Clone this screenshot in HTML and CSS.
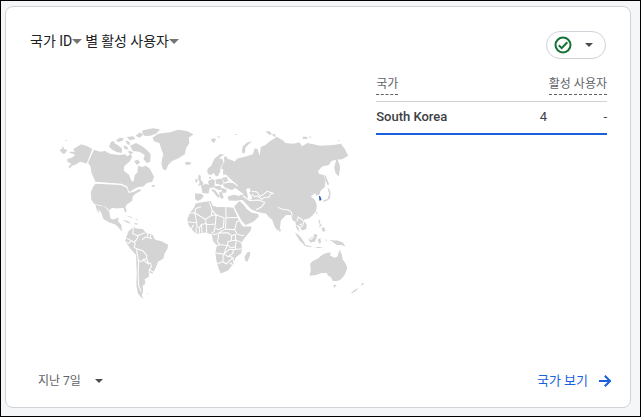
FILE: index.html
```html
<!DOCTYPE html>
<html lang="ko">
<head>
<meta charset="utf-8">
<meta name="viewport" content="width=device-width, initial-scale=1">
<title>국가 ID별 활성 사용자</title>
<link rel="stylesheet" href="styles.css">
</head>
<body>
<main class="card">
  <header class="card-head">
    <h2 class="title">
      <button class="title-pick" type="button">국가 ID<svg class="title-caret" viewBox="0 0 10 5" aria-hidden="true"><path d="M0 0h10L5 5z"/></svg></button>
      <span>별</span>
      <button class="title-pick" type="button">활성 사용자<svg class="title-caret" viewBox="0 0 10 5" aria-hidden="true"><path d="M0 0h10L5 5z"/></svg></button>
    </h2>
    <button class="status" type="button" aria-label="데이터 품질">
      <svg class="check" viewBox="0 0 18 18" aria-hidden="true"><circle cx="9" cy="9" r="7.5"/><path d="M4.8 9.3l2.9 2.8 5.6-5.8"/></svg>
      <svg class="caret" viewBox="0 0 8 4" aria-hidden="true"><path d="M0 0h8L4 4z"/></svg>
    </button>
  </header>

  <section class="content">
    <svg class="map" viewBox="30 72 346 288" role="img" aria-label="세계 지도">
      <!-- North America -->
      <g transform="translate(50 120) scale(.33333)">
        <path d="M127 90L110 133 98 130 90 128 78 136 66 140 58 148 56 142 64 134 52 128 52 120 64 116 72 112 74 106 58 102 60 98 74 98 70 90 86 80 94 76 112 82z"/>
        <path d="M28 92l8-2 2-10 5 10 9 4-8 10h-6zM46 62l6 2-4 3zM56 148l-10 4-10 3 12-3z"/>
        <path d="M132 92l18 6 15-2 15 8 25 4 20-2 7 6 10-8 4 10-6 12-18 16v14l14 10 10 22 5-2 3-18 8-8 2-20 12 4 12-4 12 10 12 24-6 14-16 4-10 10-16 2-12 6-12 8-4-2-4-14-18-8-78-6-12-28-2-16-8-14z"/>
        <path d="M136 194l76 4 18 8 6 16 16-4 16-8 6 4-18 10-8 8-2 14-16 10-4 8 4 12-4 6-6-16-20 2-14-2-8 8-12-12-20-4-14-4-8-12-2-22 8-18z"/>
        <path d="M136 256l10 4 18 2 8 10 6 6 2 18 8 8 14-6 4 4-6 10 14 14 2 12-12-14-8-8-18-6-18-10-6-18-10-14 4 18-8-14z"/>
        <path d="M176 82l12-12 16 9 12 10-1 13-16-3-14-8zM178 76l8-9 10 1-10 8zM198 64l12-8 12 2-6 8-12 3zM226 64l12 4 2 10-8-2zM220 80l10 2 6 10-12-2zM232 98l8-3 10 6-8 5zM230 54l20-2 6 8-16 4zM240 80l18-8 18 10 14 10 12 14-2 22-10 4-10-12 4-12-16-10-20-2zM256 50l14-10 10 8-12 8zM278 34l30-6 22 3-12 13-18 6-16 1-8-10zM252 126l12-4 6 8-10 8zM306 198l8 0 0 6-10-2zM216 302l18 4 8 8-8-2zM250 311l16 3-8 3z"/>
      </g>
      <!-- Greenland, Arctic and Europe -->
      <g transform="translate(150 120) scale(.33333)">
        <path d="M8 56l16-12 36-4 24-8 26 4 20 10-14 10 2 16-10 16-4 18-20 12-18 8-12 12-6 16-10-4-4-16 2-14 4-14-6-14-6-20-16-5zM104 131l8-3 12 2-4 6-12 2zM182 60l10-2 6 3-6 11-6-4zM198 54l10-2 2 4zM250 47l12-2-4 4z"/>
        <path d="M276 98l2-16 12-10 16-5-10 8-10 10-1 16zM146 166l6 4 0 12 8 10-2 6-14 2 5-10-5-12zM135 181l7-2 1 8-6 4z"/>
        <path d="M171 158l2-10 10-7 10-22 16-13 14 0-12 8-8 16-6 24-4 6-8 6-8 2z"/>
        <path d="M190 160l6-10 4-18 8-12 8-2 4 12-8 14-2 14-6 12-6 2z"/>
        <path d="M213 148l4-10 6-10-2-14 8-2 8 20-2 14-12 6z"/>
        <path d="M135 223l18 1 8 6-6 10-12 6-8-6zM152 200l16-6 8 4 3 8-4 18-18-2-2-14zM174 186l14-6 6 4 0 14-4 8-12 0zM196 181l20-3 4 14-6 6-16-4zM216 176l14-2 8 10-16 6zM218 194l22-4 20 5 2 8-16 10-10-3-14-6zM191 200l20 1 6 10-12 2-12-6zM182 210l12 2 14 18-2 8-12-14zM216 207l14 4-2 10-14-1zM207 218l8 2 6 16-6 4-6-8zM219 150l14-2 0 20-14-2zM178 173l5 0-1 7-5-1z"/>
        <path d="M232 232l20-5 22 5 4 10-20 3-22-1z"/>
      </g>
      <!-- Asia -->
      <g transform="translate(230 120) scale(.33333)">
        <path d="M-9 170L-12 144-16 116 2 122 14 127 22 118 50 112 68 106 74 88 82 90 89 110 92 84 106 78 120 66 140 54 158 64 166 72 190 74 208 70 216 82 232 72 270 80 310 78 332 74 344 90 354 110 340 118 330 122 322 120 330 142 326 172 316 162 312 146 318 122 304 126 296 138 276 142 264 156 266 164 280 168 286 184 284 204 272 214 267 228 258 229 255 222 242 232 254 242 260 258 258 276 246 290 236 298 220 302 230 318 228 330 216 334 208 322 204 320 209 340 198 326 196 308 188 304 182 288 168 288 152 304 150 324 144 336 134 324 126 302 116 294 108 284 80 278 62 270 48 254 34 240 28 228 42 226 26 214 14 206 22 198 6 184z"/>
        <path d="M35 100l3-16 12-12 14-5-10 9-9 10-3 18zM106 37l12 0 8 8-8 3zM126 46l9-1 2 8-8-1zM136 54l12 3-4 3zM217 53l12 0 4 6-14 1zM237 52l8 2-6 3zM322 63l7 0-3 3zM281 166l7 6 9 24-5 2-6-16zM292 206l6 5 3 10-1 16-8 7-12 4-1-4 13-4 5-16zM258 278l4 2-4 7z"/>
        <path class="korea" d="M266 230l5 2 3 11-6 2z"/>
        <path class="water" d="M48 210l10-3 4 8-5 6 9 12-3 10-9-3-2-14z"/>
        <path class="border" d="M65 217l14 1 12 14 10-7 10-8 18 6-8 3-4 8-14 1-8 6-12-10-10 1-8-6M144 265l14 6 18 2M-9 180l18 9 14 12M174 273l10 6 2 14M38 230l20 14 28-1M86 243l18 7-10 14-16 8"/>
      </g>
      <!-- South America -->
      <g transform="translate(110 200) scale(.33333)">
        <path d="M48 116L56 96 70 84 78 88 98 90 108 102 128 108 134 121 156 127 174 137 172 150 164 162 160 178 144 188 138 204 128 224 118 220 116 234 104 240 106 254 98 260 99 276 96 286 92 292 84 284 79 260 80 222 78 168 62 150 46 128z"/>
        <path class="border" d="M70 84l-2 20 16 6-4 12-8 6M84 110l12-6 8-2M112 103l1 10M122 107l-2 9M50 117l14 8-8 8-8-4M64 125l12 8-4 12 8 4 1 17M80 149l18 6 12 14 0 10-10 2-4 6-14-3M110 179l4 12 8 2 2 10-6 8 14 10M98 181l18 15M82 166l4 20-2 38 2 36 7 17M118 211l-1 12M96 122l10-8 20 4"/>
        <path d="M86 284l8 4 6 12-8-6zM108 282l6 0-3 2zM0 62l14-2 12-5-3 11 11 12 1 11-13-14-8-7-14 0zM48 49l12 3 11 4-10-1zM76 59l8 1-6 3z"/>
      </g>
      <!-- Africa and Arabia -->
      <g transform="translate(180 180) scale(.33333)">
        <path d="M46 74L60 70 92 66 98 80 112 84 138 84 160 86 168 104 176 124 188 142 214 142 212 154 196 174 184 190 185 208 184 222 166 236 160 254 144 274 122 283 116 270 108 240 106 222 110 200 98 184 96 166 76 160 48 164 34 150 24 136 22 120 30 100 42 86z"/>
        <path d="M162 82l16-16 12 10 10 14 14 10 20 5 2 8-16 15-24 10-12-14-12-22z"/>
        <path class="border" d="M30 102l14-1 4-13 15-5M44 101l32 20 18-12 2-16-8-24M44 101l6 30-26-2M76 121l2 12-14 3-6 9-8-2 0-12M96 93l12 14 24 9-2 28-14 8-10-4M94 109l14-2-2 28-24 2-4-4M137 84l1 32 34-1M138 116l-2 34 28 2 6-24 10-4M64 136l2 25M58 145l0 16M78 133l2 29M106 135l-4 22-8 6M98 166l14-2 16-10 8-4M116 166l-4 22 6 8 24 3 2-12 10-2 0-16-10-8-26 1M164 152l8 14 20 4M154 170l12-4 0 16 20 10M154 184l12 0M144 198l8 8 14-3 2-18M106 200l12-2M106 222l26 3 4-14 6-12M132 225l14-14 20 0 0-10M166 211l18-2M132 225l12 8 14-10 2-12M130 226l-2 22-16 6M128 248l10 6 20-18-12-6M148 255l6-3 3 8M158 236l4 16M40 137l-6 13M48 164l0-17"/>
        <path d="M196 246l-3-12 8-14 8-2 2 7-9 23z"/>
      </g>
      <!-- Southeast Asia and Oceania -->
      <g transform="translate(250 190) scale(.33333)">
        <path d="M180 224L188 216 204 208 210 202 222 194 232 191 242 190 240 200 254 206 262 202 268 182 274 194 278 212 288 226 291 238 284 256 274 270 262 276 248 276 242 264 234 260 230 252 214 252 198 258 178 260 182 244z"/>
        <path d="M134 130l10 6 12 14 10 16-4 2-14-14zM162 167l12 2 12 3-6 2-16-3zM174 148l12-4 8-10 8 4-4 12-4 8-14 2zM204 150l10-3-4 5 4 6-5 6-5-7zM194 174l16 0 8 3-16 0zM204 92l6 2 0 10 8 6-8 0zM214 118l8-4 4 12-8 2zM206 108l6 6-3 3zM238 152l12 2 12 0 16 6 8 12-12-4-14 0-10-8zM226 148l4 6-3 4zM249 287l10 1-6 9zM303 311l12-10 10-5-8 10-12 7zM334 286l4-6 4 4-8 7zM88 116l5 9-5 4-2-8z"/>
        <path class="border" d="M140 96l4-12 8 5 10 9-4 7-10 1M140 108l8 8 12-8M174 148l10 2 8-10"/>
      </g>
    </svg>

    <table class="data">
      <thead>
        <tr><th class="name" scope="col"><span class="term">국가</span></th><th scope="col" colspan="2"><span class="term">활성 사용자</span></th></tr>
      </thead>
      <tbody>
        <tr><th class="name" scope="row">South Korea</th><td>4</td><td class="change">-</td></tr>
      </tbody>
    </table>
  </section>

  <footer class="card-foot">
    <button class="period" type="button">지난 7일 <svg class="caret" viewBox="0 0 8 4" aria-hidden="true"><path d="M0 0h8L4 4z"/></svg></button>
    <a class="more" href="#">국가 보기 <svg class="arrow" viewBox="0 0 12 12" aria-hidden="true"><path d="M0 6h11M5.8.8L11 6l-5.2 5.2"/></svg></a>
  </footer>
</main>
</body>
</html>
```
FILE: styles.css
```css
* { box-sizing: border-box; }

body {
  margin: 0;
  min-height: 100vh;
  padding: 5px 9px 8px 4px;
  display: flex;
  border: 1px solid #000;
  background: #f5f6f8;
  color: #202124;
  font-family: Roboto, "Noto Sans CJK KR", sans-serif;
}

button {
  padding: 0;
  border: 0;
  background: none;
  color: inherit;
  font: inherit;
}

svg { display: block; flex: none; }

.card {
  flex: 1;
  display: flex;
  flex-direction: column;
  padding: 24px 23px 10px 24px;
  border: 1px solid #d0d2d8;
  border-radius: 8px;
  background: #fff;
}

.card-head,
.card-foot {
  display: flex;
  align-items: center;
  justify-content: space-between;
}

.title {
  display: flex;
  align-items: center;
  gap: 3px;
  margin: 0 0 8px;
  font-size: 14px;
  line-height: 20px;
  font-weight: 400;
}

.title-pick { display: flex; align-items: center; }
.title-caret { width: 10px; height: 5px; fill: #757575; }

.status {
  display: flex;
  align-items: center;
  gap: 13px;
  height: 28px;
  margin-right: 1px;
  padding: 0 12px 0 7px;
  border: 1px solid #d0d2d8;
  border-radius: 14px;
}

.check {
  width: 18px;
  height: 18px;
  fill: none;
  stroke: #137333;
  stroke-width: 2;
}

.caret { width: 8px; height: 4px; fill: #4a4d51; }

.content {
  flex: 1;
  display: grid;
  grid-template-columns: 3fr 2fr;
  align-items: start;
  padding-top: 12px;
}

.map { width: 100%; fill: #d4d4d4; }
.border { fill: none; stroke: #fff; stroke-width: 3; }
.water { fill: #fff; }
.korea { fill: #2f57b8; }

.data {
  width: 100%;
  border-collapse: collapse;
  color: #3c4043;
  font-size: 13px;
  line-height: 20px;
}

.data th,
.data td { padding: 0; text-align: right; }
.data .name { text-align: left; }
.data .change { width: 60px; }
.data thead th {
  height: 30px;
  padding-bottom: 6px;
  border-bottom: 1px solid #d0d2d8;
  color: #5f6368;
  font-size: 12px;
  font-weight: 400;
  vertical-align: bottom;
}
.data tbody th { font-weight: 500; }
.data tbody th,
.data tbody td { height: 33px; border-bottom: 2px solid #1a5fdc; }

.term { display: inline-block; border-bottom: 1px dashed #5f6368; }

.period {
  display: flex;
  align-items: center;
  gap: 14px;
  padding-left: 8px;
  color: #5f6368;
  font-size: 12px;
  line-height: 32px;
}

.more {
  display: flex;
  align-items: center;
  gap: 11px;
  margin-right: -4px;
  color: #1a5fdc;
  font-size: 13px;
  line-height: 32px;
  font-weight: 400;
  text-decoration: none;
}

.arrow {
  width: 12px;
  height: 12px;
  fill: none;
  stroke: #1a5fdc;
  stroke-width: 2;
}
```
